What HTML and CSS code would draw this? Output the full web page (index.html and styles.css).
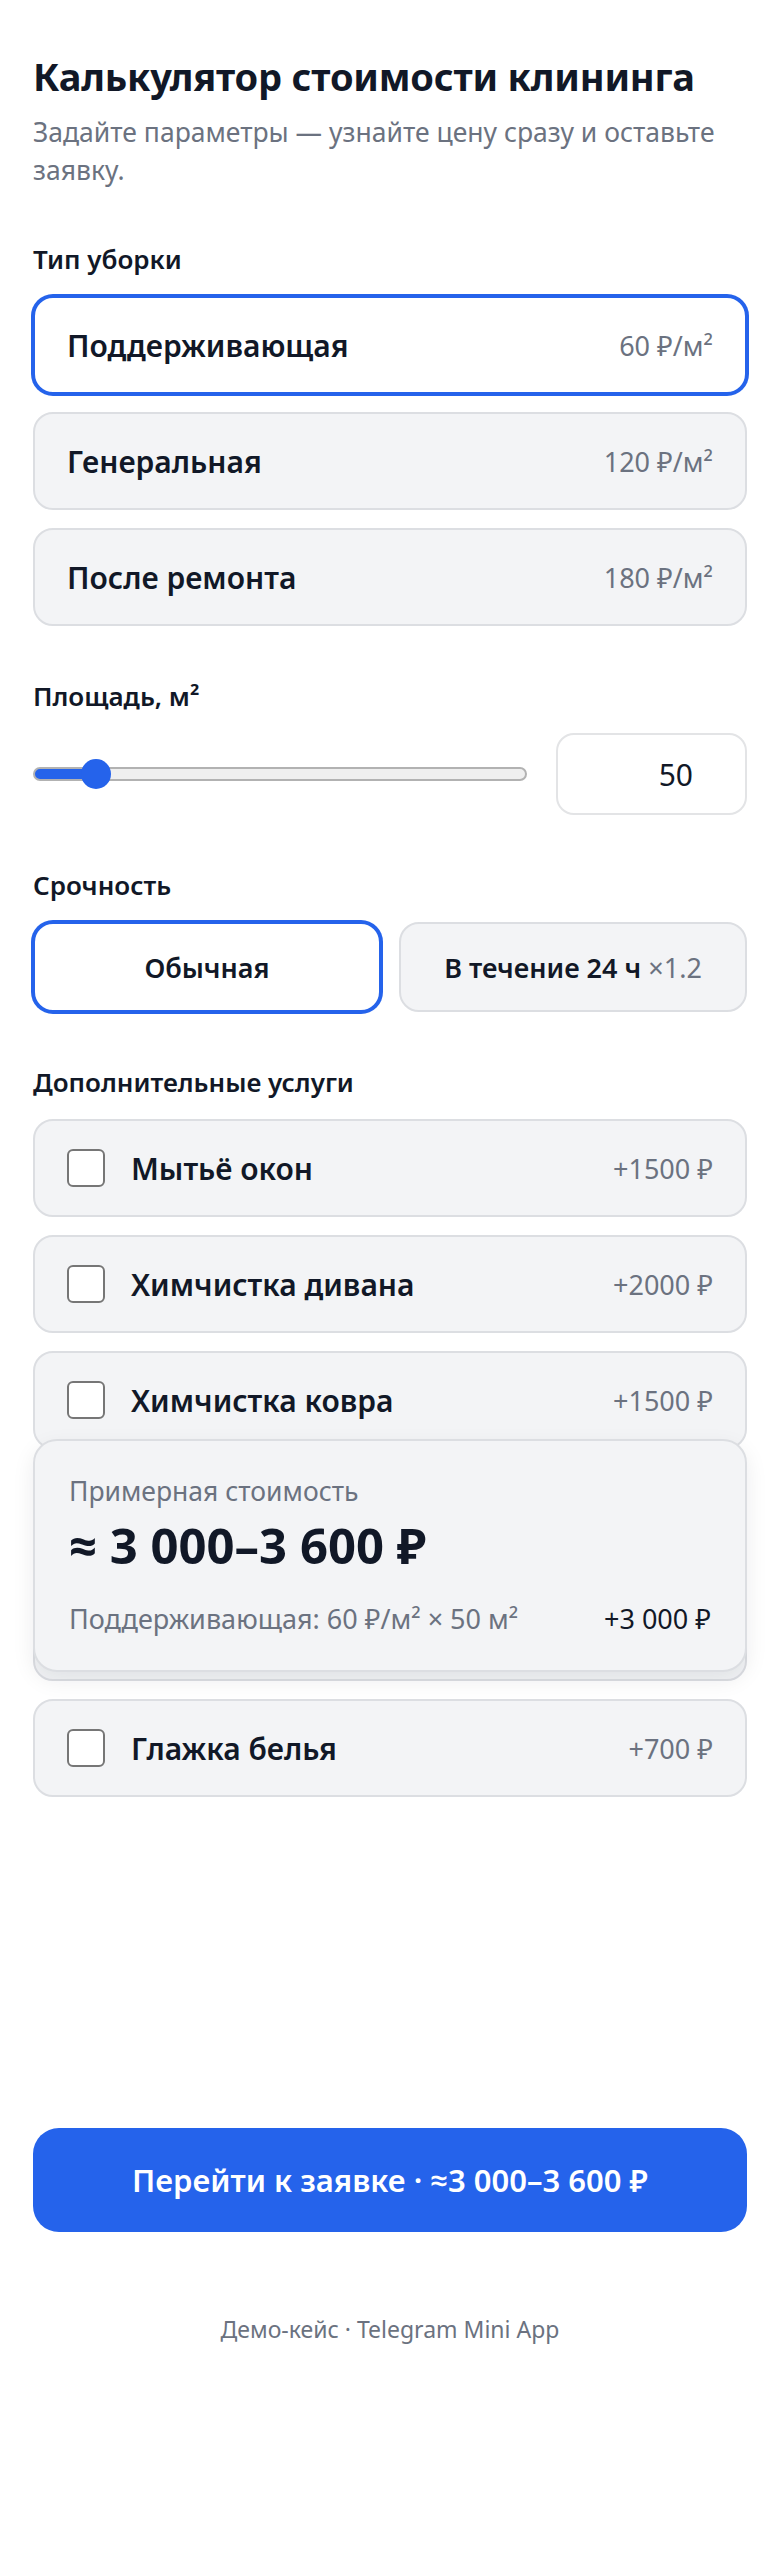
FILE: index.html
```html
<!DOCTYPE html>
<html lang="ru">
<head>
    <meta charset="UTF-8">
    <meta name="viewport" content="width=device-width, initial-scale=1.0">
    <title>Калькулятор стоимости клининга</title>
    <link rel="stylesheet" href="styles.css">
</head>
<body>
    <main class="app">
        <header class="head">
            <h1 class="title">Калькулятор стоимости клининга</h1>
            <p class="subtitle">Задайте параметры — узнайте цену сразу и оставьте заявку.</p>
        </header>

        <section class="block">
            <h2 class="label">Тип уборки</h2>
            <div class="list">
                <button class="option is-active">
                    <span class="option-name">Поддерживающая</span>
                    <span class="option-price">60 ₽/м²</span>
                </button>
                <button class="option">
                    <span class="option-name">Генеральная</span>
                    <span class="option-price">120 ₽/м²</span>
                </button>
                <button class="option">
                    <span class="option-name">После ремонта</span>
                    <span class="option-price">180 ₽/м²</span>
                </button>
            </div>
        </section>

        <section class="block">
            <h2 class="label">Площадь, м²</h2>
            <div class="area">
                <input class="range" type="range" min="20" max="320" value="50" style="--fill: 12%">
                <input class="area-input" type="number" value="50">
            </div>
        </section>

        <section class="block">
            <h2 class="label">Срочность</h2>
            <div class="urgency">
                <button class="urgency-btn is-active">Обычная</button>
                <button class="urgency-btn">В течение 24 ч <span class="muted">×1.2</span></button>
            </div>
        </section>

        <section class="block">
            <h2 class="label">Дополнительные услуги</h2>
            <div class="list">
                <label class="option addon">
                    <input class="check" type="checkbox">
                    <span class="option-name">Мытьё окон</span>
                    <span class="option-price">+1500 ₽</span>
                </label>
                <label class="option addon">
                    <input class="check" type="checkbox">
                    <span class="option-name">Химчистка дивана</span>
                    <span class="option-price">+2000 ₽</span>
                </label>
                <label class="option addon">
                    <input class="check" type="checkbox">
                    <span class="option-name">Химчистка ковра</span>
                    <span class="option-price">+1500 ₽</span>
                </label>
                <label class="option addon">
                    <input class="check" type="checkbox">
                    <span class="option-name">Мытьё холодильника</span>
                    <span class="option-price">+800 ₽</span>
                </label>
                <label class="option addon">
                    <input class="check" type="checkbox">
                    <span class="option-name">Уборка балкона</span>
                    <span class="option-price">+1000 ₽</span>
                </label>
                <label class="option addon">
                    <input class="check" type="checkbox">
                    <span class="option-name">Глажка белья</span>
                    <span class="option-price">+700 ₽</span>
                </label>
            </div>
        </section>

        <div class="summary">
            <div class="summary-caption">Примерная стоимость</div>
            <div class="summary-total">≈ 3 000–3 600 ₽</div>
            <div class="summary-row">
                <span class="muted">Поддерживающая: 60 ₽/м² × 50 м²</span>
                <span>+3 000 ₽</span>
            </div>
        </div>

        <button class="cta">Перейти к заявке · ≈3 000–3 600 ₽</button>

        <footer class="foot">Демо-кейс · Telegram Mini App</footer>
    </main>
</body>
</html>
```

FILE: styles.css
```css
:root {
    --blue: #2563eb;
    --text: #111827;
    --muted: #6b7280;
    --card: #f3f4f6;
    --line: #dcdee2;
}

* {
    box-sizing: border-box;
    margin: 0;
    padding: 0;
}

body {
    font-family: "Noto Sans", "Open Sans", sans-serif;
    background: #fff;
    color: var(--text);
}

button, input {
    font-family: inherit;
    color: inherit;
}

.app {
    padding: 53px 33px 60px;
}

.title {
    font-size: 38px;
    line-height: 47px;
    font-weight: 700;
    letter-spacing: -0.2px;
}

.subtitle {
    margin-top: 13px;
    font-size: 26.5px;
    line-height: 38px;
    color: var(--muted);
}

.block {
    margin-top: 54px;
}

.label {
    font-size: 26px;
    line-height: 32px;
    font-weight: 600;
    margin-bottom: 21px;
}

.list {
    display: flex;
    flex-direction: column;
    gap: 18px;
}

.option {
    display: flex;
    align-items: center;
    height: 98px;
    padding: 0 32px;
    background: var(--card);
    border: 2px solid var(--line);
    border-radius: 20px;
    text-align: left;
    cursor: pointer;
}

.option.is-active,
.urgency-btn.is-active {
    background: #fff;
    border-color: var(--blue);
    box-shadow: 0 0 0 2px var(--blue);
}

.option-name {
    flex: 1;
    font-size: 30px;
    font-weight: 600;
}

.option-price {
    font-size: 27px;
    color: var(--muted);
}

.addon {
    gap: 26px;
}

.check {
    appearance: none;
    -webkit-appearance: none;
    width: 38px;
    height: 38px;
    flex: none;
    background: #fff;
    border: 2px solid #767676;
    border-radius: 6px;
}

.area {
    display: flex;
    align-items: center;
    gap: 29px;
}

.range {
    -webkit-appearance: none;
    appearance: none;
    flex: 1;
    height: 30px;
    background: transparent;
}

.range::-webkit-slider-runnable-track {
    height: 14px;
    border: 2px solid #b2b2b2;
    border-radius: 7px;
    background: linear-gradient(to right, var(--blue) var(--fill), #efefef var(--fill));
}

.range::-webkit-slider-thumb {
    -webkit-appearance: none;
    width: 30px;
    height: 30px;
    margin-top: -10px;
    border: none;
    border-radius: 50%;
    background: var(--blue);
}

.area-input {
    width: 191px;
    height: 82px;
    padding: 0 52px 0 20px;
    border: 2px solid #e3e4e6;
    border-radius: 18px;
    font-size: 30px;
    text-align: right;
    -moz-appearance: textfield;
}

.area-input::-webkit-inner-spin-button,
.area-input::-webkit-outer-spin-button {
    -webkit-appearance: none;
    margin: 0;
}

.urgency {
    display: grid;
    grid-template-columns: 1fr 1fr;
    gap: 18px;
}

.urgency-btn {
    height: 90px;
    background: var(--card);
    border: 2px solid var(--line);
    border-radius: 20px;
    font-size: 27px;
    font-weight: 600;
    cursor: pointer;
}

.muted {
    color: var(--muted);
    font-weight: 400;
}

.summary {
    position: relative;
    top: -408px;
    margin: 50px 0 48px;
    padding: 32px 34px 33px;
    background: var(--card);
    border: 2px solid var(--line);
    border-radius: 24px;
    box-shadow: 0 8px 22px rgba(17, 24, 39, 0.08);
}

.summary-caption {
    font-size: 26.5px;
    line-height: 36px;
    color: var(--muted);
}

.summary-total {
    margin-top: 8px;
    font-size: 49px;
    line-height: 56px;
    font-weight: 700;
}

.summary-row {
    display: flex;
    justify-content: space-between;
    margin-top: 28px;
    font-size: 27px;
    line-height: 36px;
}

.cta {
    display: block;
    width: 100%;
    height: 104px;
    border: none;
    border-radius: 26px;
    background: var(--blue);
    color: #fff;
    font-size: 31px;
    font-weight: 600;
    cursor: pointer;
}

.foot {
    margin-top: 82px;
    text-align: center;
    font-size: 23px;
    line-height: 30px;
    color: var(--muted);
}
```
